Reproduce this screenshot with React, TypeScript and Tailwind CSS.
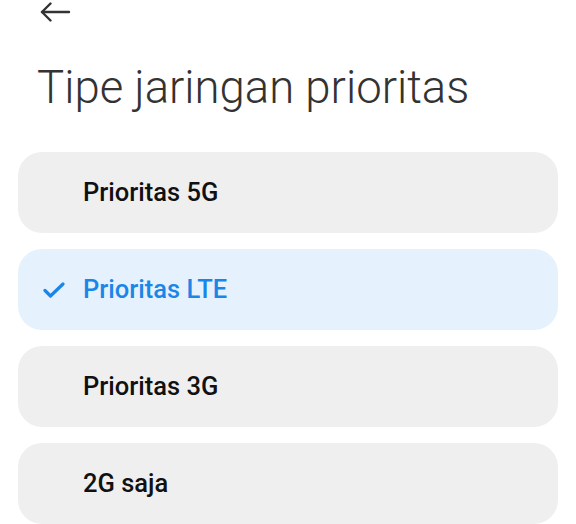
const options = [
  { id: "5g", label: "Prioritas 5G" },
  { id: "lte", label: "Prioritas LTE" },
  { id: "3g", label: "Prioritas 3G" },
  { id: "2g", label: "2G saja" },
];

const App = () => {
  const selected = "lte";

  return (
    <div
      className="w-[576px] h-[524px] overflow-hidden bg-white"
      style={{ fontFamily: "Roboto, 'Noto Sans', sans-serif" }}
    >
      <div className="h-6 pl-[40px] pt-[2px]">
        <svg width="31" height="20" viewBox="0 0 31 20" fill="none" stroke="#333333" strokeWidth="2.4" strokeLinecap="round" strokeLinejoin="round">
          <path d="M2 10 H29" />
          <path d="M10.5 1.5 L2 10 L10.5 18.5" />
        </svg>
      </div>

      <h1 className="mt-[38px] pl-[37px] text-[45.5px] leading-[52px] font-light text-[#333333]">
        Tipe jaringan prioritas
      </h1>

      <div className="mt-[38px] px-[18px] flex flex-col gap-4">
        {options.map((opt) => {
          const active = opt.id === selected;
          return (
            <div
              key={opt.id}
              className={`h-[81px] rounded-[24px] flex items-center ${
                active ? "bg-[#e5f1fd]" : "bg-[#efefef]"
              }`}
            >
              <div className="w-[65px] flex justify-end pr-[18px]">
                {active && (
                  <svg width="22" height="16" viewBox="0 0 22 16" fill="none" stroke="#1a86e8" strokeWidth="3.2" strokeLinecap="round" strokeLinejoin="round">
                    <path d="M2 8.5 L7.5 14 L20 2" />
                  </svg>
                )}
              </div>
              <span
                className={`text-[25.5px] font-medium ${
                  active ? "text-[#1a86e8]" : "text-[#111111]"
                }`}
              >
                {opt.label}
              </span>
            </div>
          );
        })}
      </div>
    </div>
  );
};

export default App;
